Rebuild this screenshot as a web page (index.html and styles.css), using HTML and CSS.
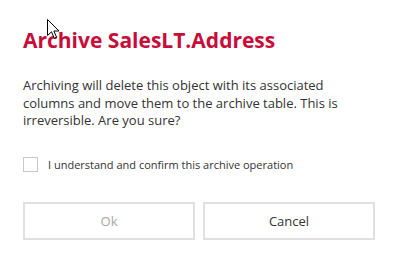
FILE: index.html
```html
<!DOCTYPE html>
<html>
<head>
<meta charset="utf-8">
<link rel="stylesheet" href="styles.css">
</head>
<body>
<div class="dialog">
  <h1 class="title">Archive SalesLT.Address</h1>
  <p class="message">Archiving will delete this object with its associated columns and move them to the archive table. This is irreversible. Are you sure?</p>
  <label class="confirm">
    <span class="box"></span>
    <span class="confirm-text">I understand and confirm this archive operation</span>
  </label>
  <div class="actions">
    <button class="btn btn-disabled">Ok</button>
    <button class="btn">Cancel</button>
  </div>
</div>
<svg class="cursor" width="13" height="21" viewBox="0 0 13 21">
  <path d="M0.5 0.5 L0.5 16.5 L4.5 12.8 L7.3 19.3 L9.6 18.3 L6.9 12 L12 12 Z" fill="#fff" stroke="#000" stroke-width="1"/>
</svg>
</body>
</html>
```
FILE: styles.css
```css
html, body {
  margin: 0;
  padding: 0;
  background: #fff;
}
body {
  font-family: "Segoe UI", "Open Sans", "Noto Sans", sans-serif;
  position: relative;
  width: 398px;
  height: 269px;
  overflow: hidden;
}
.dialog {
  padding: 26px 23px 0 23px;
}
.title {
  margin: 0;
  font-size: 21px;
  font-weight: 700;
  color: #c70d3a;
  line-height: 28px;
  letter-spacing: 0;
}
.message {
  margin: 23px 0 0 0;
  font-size: 13px;
  line-height: 17.5px;
  color: #333;
  width: 352px;
}
.confirm {
  display: flex;
  align-items: center;
  margin-top: 27px;
  gap: 10px;
}
.box {
  width: 13px;
  height: 13px;
  border: 1px solid #c8c8c8;
  background: #fff;
}
.confirm-text {
  font-size: 11px;
  color: #333;
}
.actions {
  display: flex;
  gap: 8px;
  margin-top: 30px;
  width: 352px;
}
.btn {
  flex: 1;
  height: 38px;
  border: 2px solid #e0e0e0;
  background: #fff;
  font-family: inherit;
  font-size: 13px;
  color: #333;
  padding: 0;
}
.btn-disabled {
  color: #a6a6a6;
}
.cursor {
  position: absolute;
  left: 47px;
  top: 19px;
}
```
